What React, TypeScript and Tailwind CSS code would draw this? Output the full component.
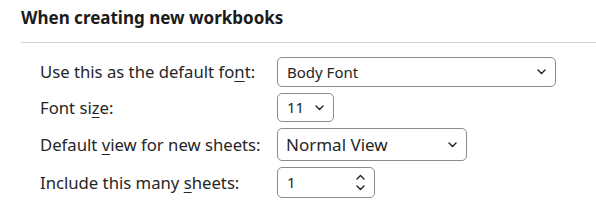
import React from "react";

const Chevron = ({ up = false }: { up?: boolean }) => (
  <svg width="9" height="6" viewBox="0 0 9 6" className="block">
    <path
      d={up ? "M1 5 L4.5 1.5 L8 5" : "M1 1 L4.5 4.5 L8 1"}
      fill="none"
      stroke="#1f1f1f"
      strokeWidth="1.4"
      strokeLinecap="round"
      strokeLinejoin="round"
    />
  </svg>
);

const U = ({ children }: { children: React.ReactNode }) => (
  <span className="underline underline-offset-[3px] decoration-1">{children}</span>
);

export default function App() {
  return (
    <div
      className="w-[596px] h-[214px] bg-white text-[#1f1f1f] overflow-hidden"
      style={{ fontFamily: '"Noto Sans", "Open Sans", sans-serif' }}
    >
      <div className="pl-[21px] pt-[6px]">
        <div className="text-[17px] font-bold leading-[24px] text-[#1b1b1b]">When creating new workbooks</div>
        <div className="mt-[12px] h-px bg-[#d4d4d4]" />
      </div>
      <div className="pl-[40px] pt-[14px] grid grid-cols-[237px_auto] gap-y-[6px] items-center text-[16.7px] text-[#262626]">
        <div className="leading-[22px]">
          Use this as the default fo<U>n</U>t:
        </div>
        <div>
          <div className="w-[279px] h-[30px] border border-[#8c8c8c] rounded-[5px] flex items-center justify-between pl-[9px] pr-[9px] text-[15px]">
            <span>Body Font</span>
            <Chevron />
          </div>
        </div>

        <div className="leading-[22px]">
          Font si<U>z</U>e:
        </div>
        <div>
          <div className="w-[57px] h-[29px] border border-[#8c8c8c] rounded-[5px] flex items-center justify-between pl-[9px] pr-[9px] text-[15px]">
            <span>11</span>
            <Chevron />
          </div>
        </div>

        <div className="leading-[22px]">
          Default <U>v</U>iew for new sheets:
        </div>
        <div>
          <div className="w-[190px] h-[33px] border border-[#8c8c8c] rounded-[5px] flex items-center justify-between pl-[8px] pr-[9px] text-[17px]">
            <span>Normal View</span>
            <Chevron />
          </div>
        </div>

        <div className="leading-[22px]">
          Include this many <U>s</U>heets:
        </div>
        <div>
          <div className="w-[98px] h-[31px] border border-[#8c8c8c] rounded-[5px] flex items-center justify-between pl-[9px] pr-[9px] text-[15px]">
            <span>1</span>
            <div className="flex flex-col gap-[5px]">
              <Chevron up />
              <Chevron />
            </div>
          </div>
        </div>
      </div>
    </div>
  );
}
